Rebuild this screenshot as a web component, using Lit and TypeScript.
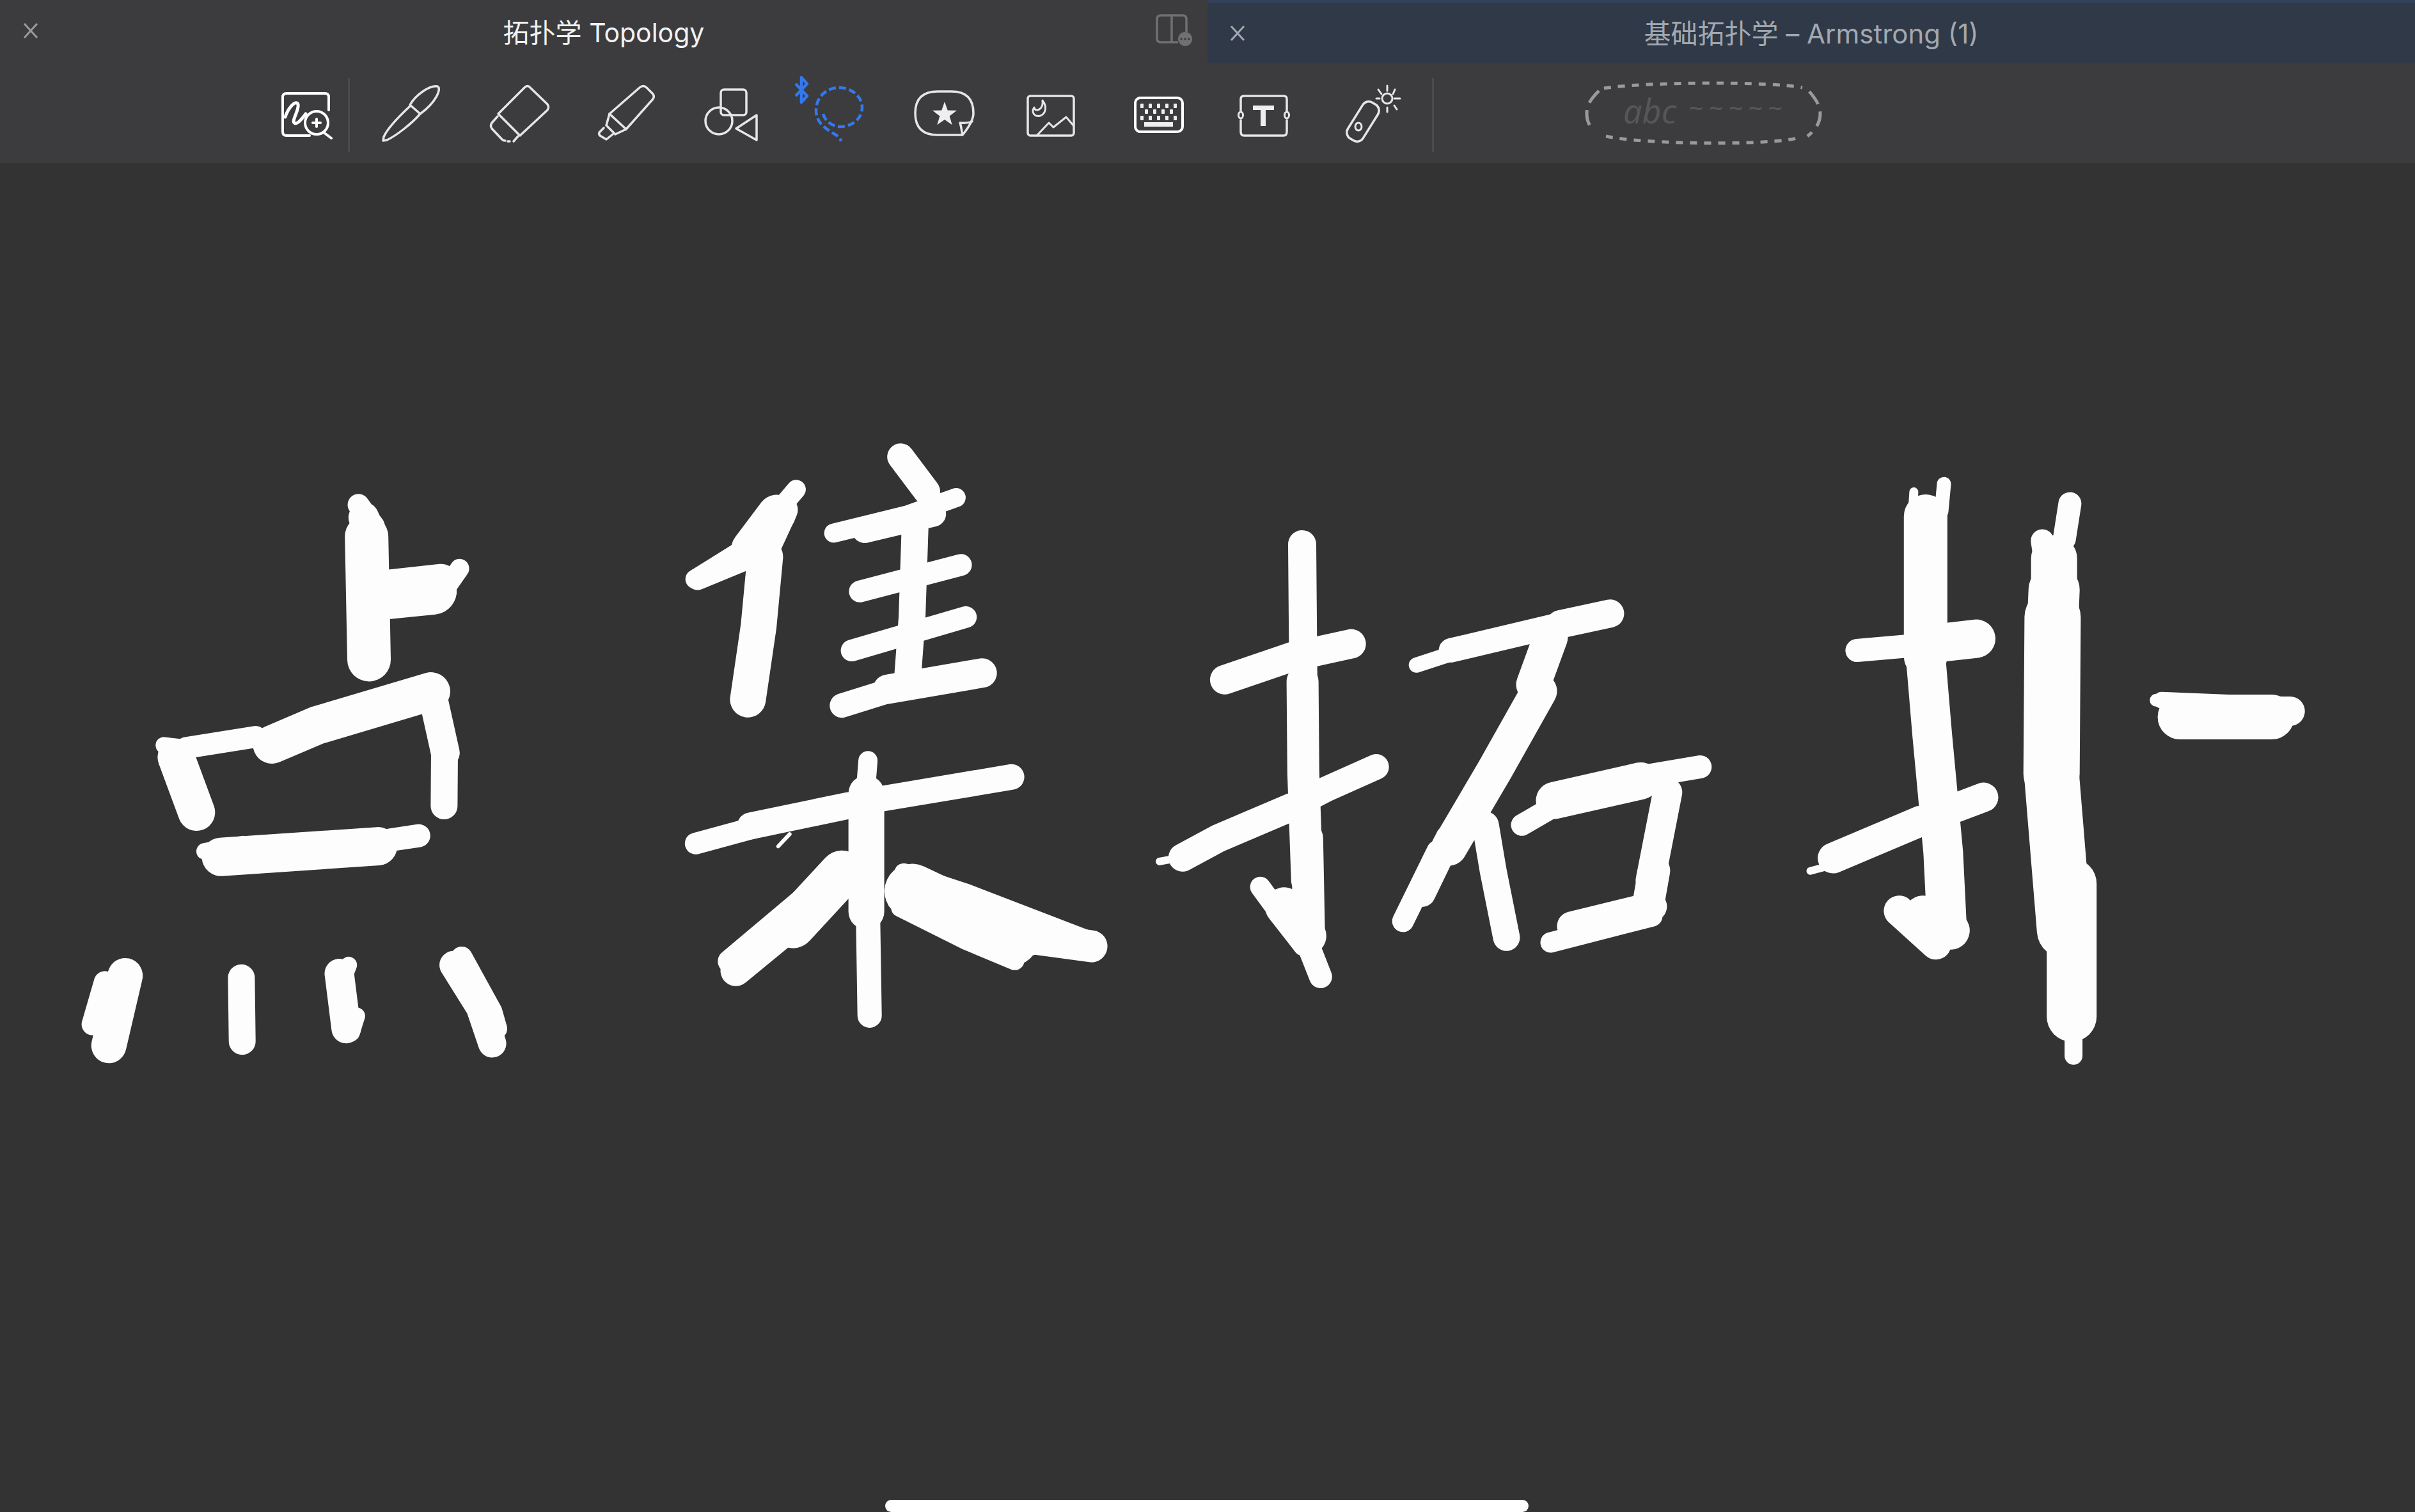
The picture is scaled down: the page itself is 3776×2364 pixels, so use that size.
import { LitElement, html, svg, css } from "lit";
import { customElement } from "lit/decorators.js";

// [width, x0, y0, x1, y1, ...]; points are read off the zoomed crops, the group scales them back
type Stroke = number[];
type InkGroup = { ox: number; oy: number; sx: number; sy: number; strokes: Stroke[] };

const INK: InkGroup[] = [
  {
    ox: 100, oy: 660, sx: 1.568, sy: 1.508,
    strokes: [
      [68, 742, 270, 748, 560],
      [34, 722, 195, 760, 245],
      [48, 735, 225, 755, 275],
      [74, 780, 410, 905, 398],
      [50, 800, 385, 925, 372],
      [30, 970, 345, 930, 400],
      [34, 300, 768, 470, 742],
      [60, 510, 760, 620, 715, 900, 635],
      [26, 245, 762, 300, 768],
      [58, 275, 790, 325, 920],
      [45, 905, 650, 935, 780],
      [42, 933, 780, 932, 905],
      [60, 385, 1025, 770, 1000],
      [36, 800, 985, 870, 975],
      [26, 345, 1012, 440, 995],
      [55, 150, 1305, 110, 1470],
      [34, 100, 1320, 70, 1420],
      [42, 435, 1310, 437, 1460],
      [46, 675, 1300, 692, 1430],
      [26, 698, 1280, 690, 1300],
      [26, 718, 1400, 705, 1440],
      [44, 955, 1280, 1020, 1380, 1050, 1465],
      [34, 975, 1262, 1048, 1390, 1060, 1430],
    ],
  },
  {
    ox: 1000, oy: 660, sx: 1.96, sy: 1.568,
    strokes: [
      [30, 170, 385, 320, 310],
      [34, 178, 385, 330, 335],
      [30, 480, 165, 390, 250],
      [46, 440, 215, 385, 310],
      [60, 340, 310, 420, 225],
      [56, 385, 330, 365, 500, 332, 680],
      [42, 800, 85, 880, 170],
      [30, 595, 272, 820, 228, 970, 185],
      [40, 690, 265, 900, 225],
      [42, 845, 240, 835, 480, 822, 620],
      [34, 675, 415, 985, 350],
      [34, 650, 560, 1000, 478],
      [38, 620, 695, 780, 655],
      [46, 760, 655, 1050, 615],
      [34, 172, 1033, 370, 990],
      [42, 340, 990, 640, 940],
      [40, 730, 925, 1140, 870],
      [6, 460, 1010, 425, 1040],
      [30, 700, 830, 695, 880],
      [56, 695, 910, 695, 1200],
      [38, 700, 1200, 705, 1455],
      [70, 620, 1105, 470, 1235],
      [48, 500, 1210, 295, 1345],
      [36, 560, 1130, 275, 1322],
      [86, 835, 1150, 1140, 1265],
      [30, 810, 1105, 1000, 1155, 1390, 1275],
      [30, 800, 1190, 1000, 1270, 1150, 1320],
      [60, 900, 1190, 1200, 1260],
      [50, 1200, 1265, 1385, 1285],
    ],
  },
  {
    ox: 1780, oy: 800, sx: 1.668, sy: 1.96,
    strokes: [
      [44, 427, 100, 430, 520],
      [50, 428, 520, 430, 800, 440, 1130],
      [50, 440, 1000, 445, 1300],
      [32, 318, 1150, 430, 1330],
      [60, 380, 1210, 440, 1300],
      [36, 440, 1320, 475, 1425],
      [46, 225, 515, 400, 445, 555, 405],
      [44, 115, 1060, 210, 1000, 400, 905],
      [40, 400, 905, 490, 850, 620, 782],
      [12, 55, 1072, 110, 1060],
      [24, 725, 470, 830, 430],
      [38, 815, 425, 1120, 340],
      [44, 1100, 345, 1230, 312],
      [54, 1075, 385, 1030, 530],
      [56, 1045, 550, 930, 790, 810, 1030],
      [34, 780, 1040, 690, 1255],
      [42, 810, 1000, 740, 1170],
      [42, 905, 960, 925, 1100, 960, 1305],
      [34, 1000, 960, 1110, 885],
      [58, 1085, 885, 1310, 825],
      [36, 1300, 815, 1465, 782],
      [46, 1380, 860, 1335, 1130],
      [50, 1345, 1100, 1330, 1200],
      [32, 1075, 1320, 1340, 1240],
      [46, 1130, 1270, 1340, 1210],
    ],
  },
  {
    ox: 2780, oy: 720, sx: 1.742, sy: 1.633,
    strokes: [
      [14, 370, 80, 365, 150],
      [22, 452, 60, 445, 130],
      [68, 402, 142, 402, 500],
      [62, 402, 500, 420, 700, 450, 1000, 460, 1190],
      [36, 215, 485, 400, 470],
      [60, 400, 470, 540, 455],
      [48, 150, 1015, 390, 920],
      [46, 390, 920, 560, 860],
      [12, 88, 1048, 140, 1035],
      [48, 330, 1150, 430, 1235],
      [60, 395, 1160, 470, 1200],
      [36, 795, 110, 780, 200],
      [36, 720, 205, 735, 300],
      [72, 752, 250, 752, 350],
      [80, 752, 330, 748, 420],
      [88, 748, 400, 745, 800],
      [86, 745, 800, 780, 1200],
      [78, 800, 1080, 800, 1420],
      [28, 805, 1480, 805, 1520],
      [70, 1095, 655, 1345, 655],
      [46, 1340, 640, 1395, 640],
      [26, 1045, 612, 1390, 625],
      [20, 1030, 612, 1060, 612],
    ],
  },
];

const strokePath = (g: InkGroup, s: Stroke) => {
  const pts: string[] = [];
  for (let i = 1; i < s.length; i += 2) {
    pts.push(`${(g.ox + s[i] / g.sx).toFixed(1)} ${(g.oy + s[i + 1] / g.sy).toFixed(1)}`);
  }
  return `M${pts.join("L")}`;
};

const starPoints = (cx: number, cy: number, R: number, r: number) => {
  const pts: string[] = [];
  for (let i = 0; i < 10; i++) {
    const a = (-90 + i * 36) * (Math.PI / 180);
    const d = i % 2 ? r : R;
    pts.push(`${(cx + d * Math.cos(a)).toFixed(1)},${(cy + d * Math.sin(a)).toFixed(1)}`);
  }
  return pts.join(" ");
};

const keyRow = (y: number, xs: number[]) =>
  xs.map((x) => svg`<rect class="solid" x=${x} y=${y} width="5" height="7" rx="1"></rect>`);

// icons are drawn in page coordinates, each svg only picks its own slot through the viewBox
const TOOLS = [
  svg`<path class="line" d="M641 166C626 180 606 200 600 214L599 220L605 219C620 212 645 192 656 179"></path>
      <path class="line" d="M641 164C650 148 672 133 684 135C691 138 682 160 657 178Z"></path>`,
  svg`<path class="line" d="M779 178L820 137Q825 132 829 137L856 163Q859 168 856 172L813 212Z"></path>
      <path class="line" d="M778 182L769 192Q766 197 769 201L785 218Q787 220 790 220M794 221H797M803 221L810 213"></path>`,
  svg`<path class="line" d="M953 178L1000 137Q1006 132 1011 137L1021 147Q1024 152 1020 156L979 202Z"></path>
      <path class="line" d="M953 178L948 196L962 210L979 202M944 200L937 207Q936 210 938 212L948 218L958 210"></path>`,
  svg`<rect class="line" x="1127" y="140" width="40" height="40" rx="5"></rect>
      <circle class="line" cx="1124" cy="189" r="21"></circle>
      <path class="line" d="M1183 180V219L1151 201Z"></path>`,
  svg`<path class="blue dash" d="M1287 178C1290 190 1302 198 1314 198C1332 198 1348 186 1348 168C1348 150 1330 137 1312 137C1292 137 1276 152 1276 172C1276 192 1290 200 1302 208C1310 212 1314 216 1315 221"></path>
      <path class="blue" d="M1244 131L1262 150L1253 160V121L1262 131L1244 150"></path>`,
  svg`<path class="line" d="M1505 211H1466Q1431 211 1431 177Q1431 143 1466 143H1488Q1522 143 1522 177Q1522 190 1505 211C1503 203 1503 197 1501 192C1510 193 1515 192 1520 190"></path>
      <polygon class="solid" points=${starPoints(1477, 179, 20, 8)}></polygon>`,
  svg`<rect class="line" x="1607" y="150" width="72" height="62" rx="4"></rect>
      <path class="line thin" d="M1630 157C1640 170 1632 184 1620 181C1614 178 1614 172 1617 168C1618 176 1632 172 1630 157Z"></path>
      <path class="line thin" d="M1621 212L1640 192L1647 199L1667 183L1679 197"></path>`,
  svg`<rect class="line bright" x="1775" y="153" width="74" height="53" rx="8"></rect>
      ${keyRow(162, [1783, 1796, 1809, 1822, 1835])}
      ${keyRow(171, [1790, 1803, 1816, 1829])}
      ${keyRow(181, [1783, 1796, 1809, 1822, 1835])}
      <rect class="solid" x="1789" y="191" width="45" height="7"></rect>`,
  svg`<path class="line" d="M1940 173V155Q1940 150 1945 150H2007Q2012 150 2012 155V173M1940 188V206Q1940 212 1945 212H2007Q2012 212 2012 206V188"></path>
      <ellipse class="line thin" cx="1940" cy="180" rx="3.5" ry="5"></ellipse>
      <ellipse class="line thin" cx="2012" cy="180" rx="3.5" ry="5"></ellipse>
      <rect class="solid" x="1959" y="165" width="33" height="7"></rect>
      <rect class="solid" x="1971" y="172" width="8" height="25"></rect>`,
  svg`<rect class="line" x="2098" y="176" width="66" height="28" rx="11" transform="rotate(-58 2131 190)"></rect>
      <ellipse class="line thin" cx="2124" cy="198" rx="5" ry="6"></ellipse>
      <circle class="line thin" cx="2169" cy="154" r="8"></circle>
      <path class="line thin" d="M2169 134V142M2181 140L2178 147M2180 154H2189M2152 154H2157M2155 140L2160 147M2180 165L2184 171M2169 168V175"></path>`,
];

@customElement("app-root")
export class AppRoot extends LitElement {
  static styles = css`
    :host {
      display: flex;
      flex-direction: column;
      width: 100vw;
      height: 100vh;
      background: #333333;
      font-family: "Inter", "Noto Sans CJK SC", sans-serif;
    }

    .tabs {
      display: flex;
      height: 99px;
      flex: none;
    }

    .tab {
      position: relative;
      flex: 1;
      display: flex;
      align-items: center;
      justify-content: center;
      padding-bottom: 4px;
      box-sizing: border-box;
      font-size: 41px;
      background: #3c3c3e;
      color: #f2f2f2;
    }

    .tab.other {
      background: #2f3947;
      border-top: 4px solid #33415a;
      color: #a3a8b0;
      font-size: 42px;
    }

    .close {
      position: absolute;
      left: 35px;
      top: 36px;
      width: 26px;
      height: 24px;
    }

    .other .close {
      left: 34px;
      top: 36px;
    }

    .close path {
      fill: none;
      stroke: #9a9a9c;
      stroke-width: 3;
    }

    .other .close path {
      stroke: #a3a8b0;
    }

    .split {
      position: absolute;
      left: 1800px;
      top: 14px;
      width: 80px;
      height: 70px;
    }

    .split path {
      fill: none;
      stroke: #707072;
      stroke-width: 3.5;
    }

    .toolbar {
      display: flex;
      align-items: center;
      flex: none;
      height: 156px;
      padding-left: 420px;
      background: #3c3c3e;
      box-sizing: border-box;
    }

    .toolbar svg {
      flex: none;
      display: block;
      height: 156px;
      overflow: visible;
    }

    .sep {
      flex: none;
      width: 3px;
      height: 115px;
      margin-top: 4px;
      background: #4b4b4d;
    }

    .line {
      fill: none;
      stroke: #e6e6e6;
      stroke-width: 3.5;
      stroke-linejoin: round;
      stroke-linecap: round;
    }

    .thin {
      stroke-width: 3;
    }

    .bright {
      stroke: #fff;
      stroke-width: 4;
    }

    .solid {
      fill: #eeeeee;
    }

    .blue {
      fill: none;
      stroke: #3478ee;
      stroke-width: 4.5;
      stroke-linejoin: round;
    }

    .dash {
      stroke-dasharray: 11 5;
    }

    .pill {
      margin-left: 239px;
    }

    .pill path {
      fill: none;
      stroke: #9a9a9a;
      stroke-width: 5;
    }

    .pill text {
      fill: #565658;
      font-family: "Noto Sans", sans-serif;
      font-style: italic;
    }

    .canvas {
      position: relative;
      flex: 1;
      min-height: 0;
    }

    .ink {
      display: block;
      width: 100%;
      height: 100%;
    }

    .ink path {
      fill: none;
      stroke: #fdfdfd;
      stroke-linecap: round;
      stroke-linejoin: round;
    }

    .home {
      position: absolute;
      left: 1384px;
      bottom: 0;
      width: 1006px;
      height: 19px;
      border-radius: 10px;
      background: #fff;
    }
  `;

  private closeIcon() {
    return html`<svg class="close" viewBox="0 0 26 24"><path d="M3 1L23 23M23 1L3 23"></path></svg>`;
  }

  private renderTabs() {
    return html`
      <div class="tabs">
        <div class="tab">
          ${this.closeIcon()}
          <span>拓扑学 Topology</span>
          <svg class="split" viewBox="1800 14 80 70">
            <path d="M1832 24H1815Q1809 24 1809 30V60Q1809 66 1815 66H1842M1832 24H1849Q1855 24 1855 30V50M1832 24V66"></path>
            <circle cx="1853" cy="61" r="11" fill="#707072"></circle>
            <circle cx="1847" cy="61" r="1.6" fill="#333"></circle>
            <circle cx="1853" cy="61" r="1.6" fill="#333"></circle>
            <circle cx="1859" cy="61" r="1.6" fill="#333"></circle>
          </svg>
        </div>
        <div class="tab other">
          ${this.closeIcon()}
          <span>基础拓扑学 – Armstrong (1)</span>
        </div>
      </div>
    `;
  }

  private renderToolbar() {
    return html`
      <div class="toolbar">
        <svg width="120" viewBox="420 99 120 156">
          <path class="line bright" d="M484 212H448Q442 212 442 206V152Q442 146 448 146H508Q514 146 514 152V172"></path>
          <path class="line bright" style="stroke-width:5" d="M446 183C450 170 462 155 466 163C468 172 456 188 460 192C464 196 472 186 478 178"></path>
          <circle class="line bright thin" cx="495" cy="192" r="18"></circle>
          <path class="line bright thin" d="M489 192H501M495 186V198M506 207L518 216"></path>
        </svg>
        <div class="sep" style="margin-left:4px;margin-right:12px"></div>
        ${TOOLS.map(
          (icon, i) => html`<svg width="166" viewBox="${559 + i * 166} 99 166 156">${icon}</svg>`
        )}
        <div class="sep" style="margin-left:20px"></div>
        <svg class="pill" width="370" viewBox="2481 99 370 156">
          <path stroke-dasharray="11 11" d="M2508 138C2570 128 2770 127 2818 137"></path>
          <path stroke-dasharray="11 11" d="M2511 213C2570 226 2770 228 2814 215"></path>
          <path stroke-dasharray="24 12" d="M2500 142C2490 152 2481 162 2481 178C2481 190 2486 198 2492 204"></path>
          <path stroke-dasharray="24 12" d="M2829 143C2840 156 2846 166 2846 178C2846 192 2838 204 2826 213"></path>
          <text x="2538" y="193" font-size="52">abc</text>
          <text x="2640" y="184" font-size="40" letter-spacing="8">~~~~~</text>
        </svg>
      </div>
    `;
  }

  render() {
    return html`
      ${this.renderTabs()} ${this.renderToolbar()}
      <div class="canvas">
        <svg class="ink" viewBox="0 255 3776 2109">
          ${INK.map((g) =>
            g.strokes.map((s) => svg`<path d=${strokePath(g, s)} stroke-width=${s[0]}></path>`)
          )}
        </svg>
        <div class="home"></div>
      </div>
    `;
  }
}
